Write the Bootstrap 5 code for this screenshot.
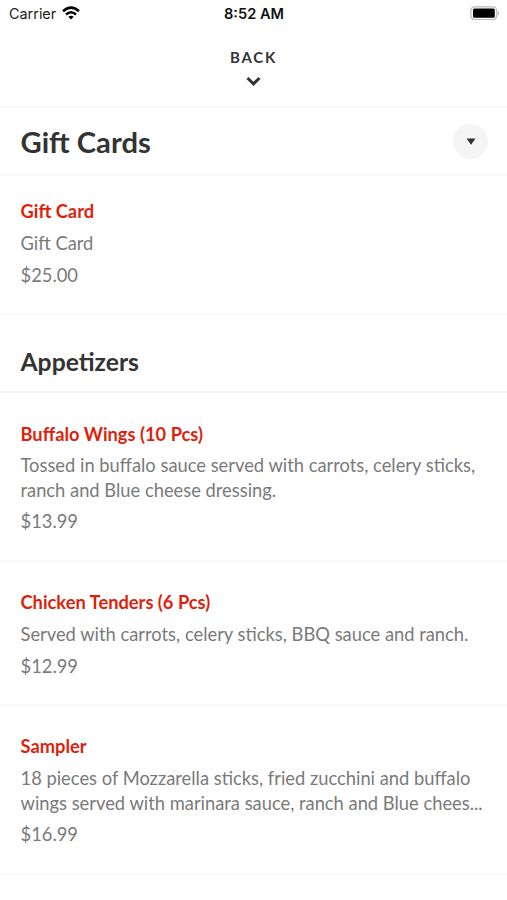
<!DOCTYPE html>
<html lang="en">
<head>
<meta charset="utf-8">
<meta name="viewport" content="width=device-width, initial-scale=1">
<title>Menu</title>
<link href="https://cdn.jsdelivr.net/npm/bootstrap@5.3.0/dist/css/bootstrap.min.css" rel="stylesheet">
<style>
body{font-family:Lato,sans-serif;color:#333;background:#fff;width:507px;height:900px;overflow:hidden}
.status-bar{height:28px;font:14.4px/28px Inter,sans-serif;color:#222;padding:0 7px 0 9px}
.status-bar .clock{font-weight:600;font-size:14.6px;color:#111;margin-left:-1px}
.status-side{flex:1 1 0}
.status-side svg{margin-top:-2px}
.wifi{margin-left:6px}
.back-bar{height:80px;border-bottom:2px solid #f7f7f7;padding-top:20px}
.back-label{font-size:15px;line-height:18px;font-weight:700;letter-spacing:1.7px}
.back-bar svg{margin-top:10px}
.group-head{height:68px;border-bottom:2px solid #f7f7f7;padding:0 19px 0 20.5px}
.group-head h1{font-size:29.2px;line-height:34px;font-weight:700;padding-top:2px}
.section-head{height:78px;border-bottom:2px solid #f7f7f7;padding:30px 20.5px 0}
.section-head h2{font-size:24.7px;line-height:34px;font-weight:700}
.round-btn{width:35px;height:35px;background:#f5f5f5}
.dish{height:169px;padding:28px 20.5px 0;border-bottom:2px solid #f7f7f7;font-size:18.34px;line-height:24.500px;color:#7a7a7a}
.dish h3{font-size:18.3px;line-height:25px;font-weight:700;color:#df1f0c;margin-bottom:7px}
.dish p{margin-bottom:7px;white-space:nowrap}
.dish-short{height:144px}
.dish-first{height:139px;padding-top:23px}
.dish-lower h3{margin-top:1px;margin-bottom:6px}
</style>
<script src="https://cdn.jsdelivr.net/npm/bootstrap@5.3.0/dist/js/bootstrap.bundle.min.js"></script>
</head>
<body>
<header>
<div class="status-bar d-flex align-items-center">
<div class="status-side d-flex align-items-center"><span>Carrier</span>
<svg class="wifi" width="18" height="14" viewBox="0 0 18 14" fill="none" stroke="#000" stroke-width="2.500"><path d="M1 5.200Q9-2 17 5.200M4 8.500Q9 4 14 8.500"/><path d="M9 13.500L6.300 10.800Q9 8.600 11.700 10.800Z" fill="#000" stroke="none"/></svg></div>
<span class="clock">8:52 AM</span>
<div class="status-side d-flex justify-content-end"><svg width="30" height="14" viewBox="0 0 30 14"><rect x=".8" y=".8" width="26" height="12.800" rx="4" fill="none" stroke="#bbb" stroke-width="1.300"/><rect x="3" y="2.500" width="21.800" height="9.300" rx="1.500"/><path d="M28 4.800Q30.500 7.200 28 9.600Z" fill="#bbb"/></svg></div>
</div>
<div class="back-bar d-flex flex-column align-items-center"><span class="back-label">BACK</span>
<svg width="16" height="11" viewBox="0 0 16 11" fill="none" stroke="#333" stroke-width="3"><path d="M1.500 2L7.500 7.800L13.500 2"/></svg></div>
</header>
<main>
<div class="group-head d-flex align-items-center justify-content-between"><h1 class="m-0">Gift Cards</h1><button class="round-btn btn rounded-circle p-0 border-0 d-flex align-items-center justify-content-center" aria-label="Choose section"><svg width="10" height="7" viewBox="0 0 10 7"><path d="M.5.5H9.500L5 6.800Z" fill="#333"/></svg></button></div>
<article class="dish dish-first"><h3>Gift Card</h3><p>Gift Card</p><div>$25.00</div></article>
<div class="section-head"><h2 class="m-0">Appetizers</h2></div>
<article class="dish dish-lower"><h3>Buffalo Wings (10 Pcs)</h3><p>Tossed in buffalo sauce served with carrots, celery sticks,<br>ranch and Blue cheese dressing.</p><div>$13.99</div></article>
<article class="dish dish-short"><h3>Chicken Tenders (6 Pcs)</h3><p>Served with carrots, celery sticks, BBQ sauce and ranch.</p><div>$12.99</div></article>
<article class="dish"><h3>Sampler</h3><p>18 pieces of Mozzarella sticks, fried zucchini and buffalo<br>wings served with marinara sauce, ranch and Blue chees...</p><div>$16.99</div></article>
</main>
</body>
</html>
